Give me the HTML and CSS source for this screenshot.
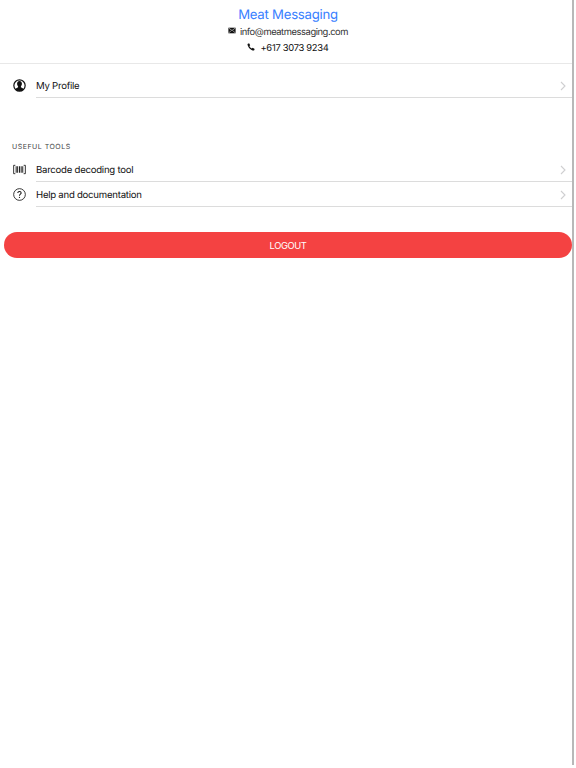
FILE: index.html
```html
<!DOCTYPE html>
<html>

<head>
    <title>Meat Messaging</title>
    <meta name="viewport" content="width=device-width, initial-scale=1.0">
    <link rel="stylesheet" href="styles.css">
</head>

<body>
    <div class="screen">
        <div class="contact">
            <h1>Meat Messaging</h1>
            <div class="contact-line mail">
                <svg class="mini-icon" viewBox="0 0 10 8"><path d="M0.5 0.5h9v7h-9z" fill="#111"/><path d="M1 1l4 3 4-3M1 7l3-3M9 7l-3-3" fill="none" stroke="#fff" stroke-width="0.7"/></svg>
                <span>info@meatmessaging.com</span>
            </div>
            <div class="contact-line phone">
                <svg class="mini-icon phone-icon" viewBox="0 0 10 10"><path d="M0.6 1.200L2.600 0.300 4 2.800 3 3.800C3.500 5 4.600 6.200 6 7L7.100 6 9.600 7.500 8.800 9.400C5 9.600 0.800 5 0.600 1.200z" fill="#111"/></svg>
                <span>+617 3073 9234</span>
            </div>
        </div>

        <div class="list first-list">
            <div class="list-row">
                <svg class="row-icon" viewBox="0 0 14 14">
                    <circle cx="7" cy="7" r="6.100" fill="none" stroke="#111" stroke-width="1.300"/>
                    <path d="M7 2.200c1.700 0 2.600 1.300 2.600 3 0 1.200-.5 2.200-1.100 2.800v1l2.300 1.200v1.300a6 6 0 0 1-7.600 0v-1.300l2.300-1.200V8C4.900 7.400 4.400 6.400 4.400 5.200 4.400 3.500 5.300 2.200 7 2.200z" fill="#111"/>
                </svg>
                <div class="row-body">
                    <span>My Profile</span>
                    <svg class="chevron" viewBox="0 0 6 10"><path d="M1 1l4 4-4 4" fill="none" stroke="#cfcfd1" stroke-width="1.100"/></svg>
                </div>
            </div>
        </div>

        <div class="section-title">USEFUL TOOLS</div>

        <div class="list">
            <div class="list-row">
                <svg class="row-icon" viewBox="0 0 14 14">
                    <path d="M2.500 2.500H.7v9h1.800M11.500 2.500h1.800v9h-1.800" fill="none" stroke="#111" stroke-width="0.900"/>
                    <path d="M3.400 3.500v7M5 3.500v7M7 3.500v7M8.800 3.500v7M10.500 3.500v7" fill="none" stroke="#111" stroke-width="1"/>
                </svg>
                <div class="row-body">
                    <span>Barcode decoding tool</span>
                    <svg class="chevron" viewBox="0 0 6 10"><path d="M1 1l4 4-4 4" fill="none" stroke="#cfcfd1" stroke-width="1.100"/></svg>
                </div>
            </div>
            <div class="list-row">
                <svg class="row-icon" viewBox="0 0 14 14">
                    <circle cx="7" cy="7" r="6.300" fill="none" stroke="#111" stroke-width="0.900"/>
                    <path d="M5.200 5.500C5.200 4.400 6 3.800 7 3.800s1.800.6 1.800 1.600C8.800 6.700 7 6.700 7 8.300" fill="none" stroke="#111" stroke-width="1.100"/>
                    <circle cx="7" cy="10" r="0.700" fill="#111"/>
                </svg>
                <div class="row-body">
                    <span>Help and documentation</span>
                    <svg class="chevron" viewBox="0 0 6 10"><path d="M1 1l4 4-4 4" fill="none" stroke="#cfcfd1" stroke-width="1.100"/></svg>
                </div>
            </div>
        </div>

        <button type="button" class="logout-btn">LOGOUT</button>
    </div>
</body>
</html>
```

FILE: styles.css
```css
* {
    box-sizing: border-box;
}

html, body {
    margin: 0;
    padding: 0;
    background-color: #ffffff;
}

body {
    font-family: Inter, "Liberation Sans", sans-serif;
    color: #111111;
    text-rendering: geometricPrecision;
}

.screen {
    width: 574px;
    height: 765px;
    border-right: 2px solid #b8b8b8;
    padding-top: 7px;
}

.contact {
    height: 57px;
    padding-left: 4px;
    border-bottom: 1px solid #e8e8e8;
    text-align: center;
}

h1 {
    margin: 0 0 1px;
    font-size: 13.2px;
    line-height: 17px;
    font-weight: 400;
    letter-spacing: -0.25px;
    color: #3880ff;
}

.contact-line {
    display: flex;
    justify-content: center;
    align-items: flex-start;
    font-size: 9.4px;
    line-height: 16px;
    letter-spacing: -0.3px;
}

.contact-line.mail {
    color: #333333;
    letter-spacing: -0.44px;
}

.mini-icon {
    width: 8px;
    height: 7px;
    margin: 2px 4px 0 0;
}

.phone-icon {
    height: 8px;
    margin-right: 5px;
}

.list {
    display: flex;
    flex-direction: column;
}

.first-list {
    margin-top: 9px;
}

.list-row {
    display: flex;
    align-items: center;
    height: 25px;
}

.row-icon {
    width: 13px;
    height: 13px;
    margin: 0 10px 0 13px;
    flex-shrink: 0;
}

.row-body {
    flex: 1;
    height: 25px;
    display: flex;
    align-items: center;
    justify-content: space-between;
    padding: 3px 6px 0 0;
    border-bottom: 1px solid #dcdcdc;
    font-size: 9.6px;
    letter-spacing: -0.25px;
}

.chevron {
    width: 6px;
    height: 10px;
    margin-top: -2px;
}

.section-title {
    margin: 43px 0 0 12px;
    height: 16px;
    font-size: 7px;
    line-height: 12px;
    letter-spacing: 0.5px;
    color: #444444;
}

.logout-btn {
    display: block;
    width: 568px;
    height: 26px;
    margin: 25px 0 0 4px;
    border: none;
    border-radius: 13px;
    background-color: #f44242;
    color: #ffffff;
    font-family: inherit;
    font-size: 9.4px;
    letter-spacing: -0.4px;
}
```
